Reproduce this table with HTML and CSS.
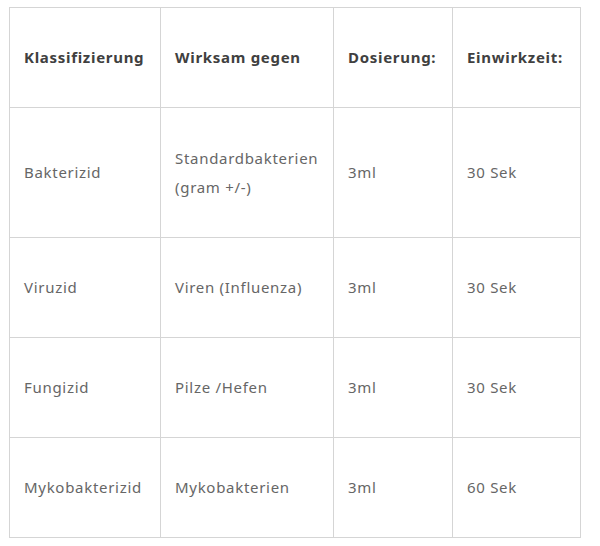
FILE: index.html
```html
<!DOCTYPE html>
<html lang="de">
<head>
<meta charset="utf-8">
<link rel="stylesheet" href="styles.css">
</head>
<body>
<div class="wrap">
<table class="tbl">
  <colgroup>
    <col class="c1"><col class="c2"><col class="c3"><col class="c4">
  </colgroup>
  <thead>
    <tr class="row-h">
      <th>Klassifizierung</th>
      <th>Wirksam gegen</th>
      <th>Dosierung:</th>
      <th>Einwirkzeit:</th>
    </tr>
  </thead>
  <tbody>
    <tr class="row-tall">
      <td>Bakterizid</td>
      <td>Standardbakterien<br>(gram +/-)</td>
      <td>3ml</td>
      <td>30 Sek</td>
    </tr>
    <tr class="row">
      <td>Viruzid</td>
      <td>Viren (Influenza)</td>
      <td>3ml</td>
      <td>30 Sek</td>
    </tr>
    <tr class="row">
      <td>Fungizid</td>
      <td>Pilze /Hefen</td>
      <td>3ml</td>
      <td>30 Sek</td>
    </tr>
    <tr class="row">
      <td>Mykobakterizid</td>
      <td>Mykobakterien</td>
      <td>3ml</td>
      <td>60 Sek</td>
    </tr>
  </tbody>
</table>
</div>
</body>
</html>
```
FILE: styles.css
```css
html, body {
  margin: 0;
  padding: 0;
  background: #ffffff;
}
.wrap {
  padding: 7px 0 0 9px;
}
.tbl {
  border-collapse: collapse;
  table-layout: fixed;
  width: 571px;
  font-family: "Noto Sans", "Open Sans", sans-serif;
  font-size: 15px;
  color: #666666;
  letter-spacing: 0.7px;
}
.c1 { width: 151px; }
.c2 { width: 173px; }
.c3 { width: 119px; }
.c4 { width: 128px; }
.tbl th,
.tbl td {
  border: 1px solid #d5d5d5;
  padding: 0 14px;
  text-align: left;
  vertical-align: middle;
  line-height: 29px;
}
.tbl th {
  font-weight: 700;
  color: #404040;
}
.row-h { height: 100px; }
.row-tall { height: 130px; }
.row { height: 100px; }
```
